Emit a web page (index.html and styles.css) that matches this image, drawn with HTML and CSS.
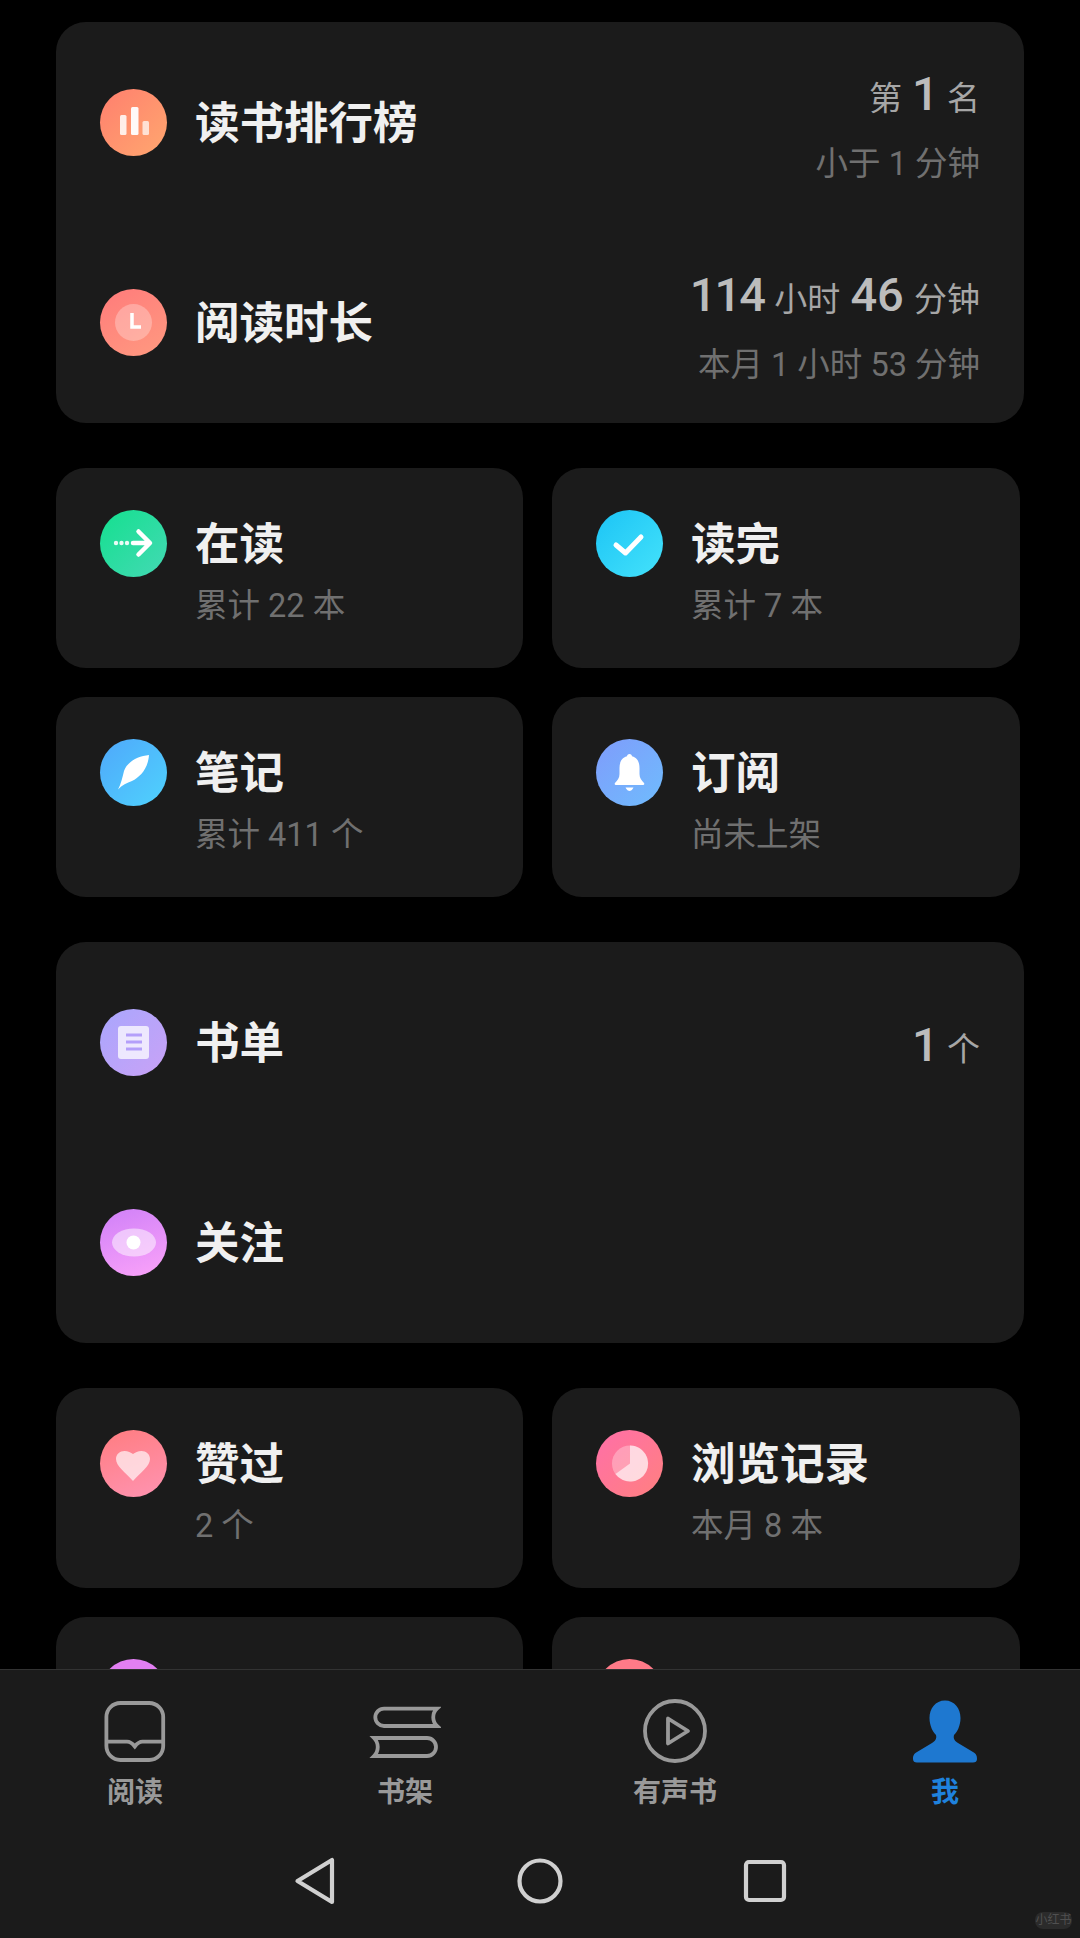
FILE: index.html
```html
<!DOCTYPE html>
<html lang="zh-CN">
<head>
  <meta charset="UTF-8" />
  <meta name="viewport" content="width=device-width, initial-scale=1.0" />
  <title>我</title>
  <link rel="stylesheet" href="styles.css">
</head>
<body>
  <div class="page">
    <main class="content">
      <section class="wide-card">
        <div class="row">
          <span class="icon icon-rank">
            <svg viewBox="0 0 67 67"><rect x="20" y="26" width="6.500" height="20" rx="1.500" fill="#fff" opacity=".85"/><rect x="31" y="18" width="7.500" height="28" rx="1.500" fill="#fff" opacity=".95"/><rect x="42.500" y="32" width="6.500" height="14" rx="1.500" fill="#fff" opacity=".7"/></svg>
          </span>
          <h2 class="title">读书排行榜</h2>
          <div class="value">
            <p class="value-main">第 <b class="tight">1</b> 名</p>
            <p class="value-sub">小于 1 分钟</p>
          </div>
        </div>
        <div class="row">
          <span class="icon icon-time">
            <svg viewBox="0 0 67 67"><circle cx="33.500" cy="33.500" r="18.500" fill="#fff" opacity=".28"/><path d="M32 24v14h9" fill="none" stroke="#fff" stroke-width="3.500"/></svg>
          </span>
          <h2 class="title">阅读时长</h2>
          <div class="value">
            <p class="value-main"><b class="tight">114</b> 小时 <b>46</b> 分钟</p>
            <p class="value-sub">本月 1 小时 53 分钟</p>
          </div>
        </div>
      </section>

      <section class="grid">
        <div class="card">
          <span class="icon icon-reading">
            <svg viewBox="0 0 67 67"><circle cx="16" cy="33" r="2.200" fill="#fff" opacity=".9"/><circle cx="21.500" cy="33" r="2.200" fill="#fff" opacity=".9"/><circle cx="27" cy="33" r="2.200" fill="#fff" opacity=".9"/><path d="M33 33h16M38.500 21.500 50 33 38.500 44.500" fill="none" stroke="#fff" stroke-width="4.500" stroke-linecap="round" stroke-linejoin="round"/></svg>
          </span>
          <div class="card-text">
            <h2 class="title">在读</h2>
            <p class="sub">累计 22 本</p>
          </div>
        </div>
        <div class="card">
          <span class="icon icon-done">
            <svg viewBox="0 0 67 67"><path d="M20 35 29.500 43 45 27" fill="none" stroke="#fff" stroke-width="5" stroke-linecap="round" stroke-linejoin="round"/></svg>
          </span>
          <div class="card-text">
            <h2 class="title">读完</h2>
            <p class="sub">累计 7 本</p>
          </div>
        </div>
        <div class="card">
          <span class="icon icon-note">
            <svg viewBox="0 0 67 67"><path d="M49 16C38 17 27 23 24 32C22.500 38 21 45 18 50.500C22 46 27 44 32 42C40 38 48 30 49 16Z" fill="#fff"/></svg>
          </span>
          <div class="card-text">
            <h2 class="title">笔记</h2>
            <p class="sub">累计 411 个</p>
          </div>
        </div>
        <div class="card">
          <span class="icon icon-sub">
            <svg viewBox="0 0 67 67"><path d="M33.500 15C32 15 31 16 31 17.300C25 19 23.500 24 23.500 29V35C23.500 39 21.500 41.500 19 44Q18 46 20 46H47Q49 46 48 44C45.500 41.500 43.500 39 43.500 35V29C43.500 24 42 19 36 17.300C36 16 35 15 33.500 15Z" fill="#fff"/><path d="M29.500 48.500H37.500C36.500 51 34.500 52 33.500 52S30.500 51 29.500 48.500Z" fill="#fff"/></svg>
          </span>
          <div class="card-text">
            <h2 class="title">订阅</h2>
            <p class="sub">尚未上架</p>
          </div>
        </div>
      </section>

      <section class="wide-card">
        <div class="row">
          <span class="icon icon-list">
            <svg viewBox="0 0 67 67"><rect x="18" y="17" width="31" height="33" rx="3" fill="#fff" opacity=".75"/><path d="M26 26h16M26 33h16M26 40h16" stroke="#b49ffa" stroke-width="2.800"/></svg>
          </span>
          <h2 class="title">书单</h2>
          <div class="value value-single">
            <p class="value-main"><b class="tight">1</b> 个</p>
          </div>
        </div>
        <div class="row">
          <span class="icon icon-follow">
            <svg viewBox="0 0 67 67"><ellipse cx="34" cy="33.500" rx="22" ry="14" fill="#fff" opacity=".5"/><circle cx="33.500" cy="33.500" r="7" fill="#fff"/></svg>
          </span>
          <h2 class="title">关注</h2>
        </div>
      </section>

      <section class="grid">
        <div class="card">
          <span class="icon icon-like">
            <svg viewBox="0 0 67 67"><path d="M33 51C25 42 16 36 16 29C16 24 20 21 24.500 21C28 21 31 22.500 33 24C35 22.500 38 21 41.500 21C46 21 50 24 50 29C50 36 41 42 33 51Z" fill="#fff" opacity=".66"/></svg>
          </span>
          <div class="card-text">
            <h2 class="title">赞过</h2>
            <p class="sub">2 个</p>
          </div>
        </div>
        <div class="card">
          <span class="icon icon-history">
            <svg viewBox="0 0 67 67"><circle cx="34" cy="33.500" r="18" fill="#fff" opacity=".3"/><path d="M34 33.500V15.500A18 18 0 1 1 19.500 44Z" fill="#fff" opacity=".6"/></svg>
          </span>
          <div class="card-text">
            <h2 class="title">浏览记录</h2>
            <p class="sub">本月 8 本</p>
          </div>
        </div>
        <div class="card">
          <span class="icon icon-more-a"></span>
        </div>
        <div class="card">
          <span class="icon icon-more-b"></span>
        </div>
      </section>
    </main>

    <footer class="bottom">
      <nav class="tabs">
        <a class="tab">
          <svg viewBox="0 0 72 64"><rect x="7.400" y="4" width="56.800" height="57" rx="14"/><path d="M7.400 42.700H28Q32 42.700 35.800 47.500Q39.500 42.700 43.500 42.700H64.200"/></svg>
          <span>阅读</span>
        </a>
        <a class="tab">
          <svg viewBox="0 0 72 64"><path d="M68 9.600H15A8.700 8.700 0 0 0 15 27H68C63 22.500 63 14 68 9.600Z"/><path d="M5 39H58A9 9 0 0 1 58 57H5C10 52 10 44 5 39Z"/></svg>
          <span>书架</span>
        </a>
        <a class="tab">
          <svg viewBox="0 0 72 64"><circle cx="36" cy="32" r="30"/><path d="M29 19.500 49 32 29 44.500Z" stroke-linejoin="round"/></svg>
          <span>有声书</span>
        </a>
        <a class="tab tab-active">
          <svg viewBox="0 0 72 64"><path d="M36 1.500C26.500 1.500 20.500 9.500 20.500 19C20.500 27 24 33 27 36C28 40 26 42 23 44L8 53C4.500 55 4 57 4 60C4 62.500 5.500 63.500 8 63.500H64C66.500 63.500 68 62.500 68 60C68 57 67.500 55 64 53L49 44C46 42 44 40 45 36C48 33 51.500 27 51.500 19C51.500 9.500 45.500 1.500 36 1.500Z"/></svg>
          <span>我</span>
        </a>
      </nav>
      <div class="sysbar">
        <svg viewBox="0 0 50 50"><path d="M7.500 25 42 4V46Z" stroke-linejoin="round"/></svg>
        <svg viewBox="0 0 50 50"><circle cx="25" cy="25" r="20.500"/></svg>
        <svg viewBox="0 0 50 50"><rect x="6" y="6" width="38" height="38" rx="3"/></svg>
      </div>
      <span class="watermark">小红书</span>
    </footer>
  </div>
</body>
</html>
```

FILE: styles.css
```css
* {
  box-sizing: border-box;
}
body {
  margin: 0;
  background-color: #000;
  font-family: Roboto, "Noto Sans CJK SC", sans-serif;
}
h2, p {
  margin: 0;
}
.page {
  width: 1080px;
  height: 1938px;
  display: flex;
  flex-direction: column;
  overflow: hidden;
}
.content {
  flex: 1;
  min-height: 0;
  overflow: hidden;
  padding: 22px 0 0 56px;
}

.wide-card {
  width: 968px;
  height: 401px;
  margin-bottom: 45px;
  background-color: #1b1b1b;
  border-radius: 30px;
}
.row {
  height: 200.5px;
  padding: 0 44px;
  display: flex;
  align-items: center;
  gap: 28px;
}
.title {
  font-size: 44.5px;
  font-weight: 700;
  line-height: 67px;
  color: #f0f0f0;
}
.row .title {
  margin-top: 4px;
}
.value {
  margin-left: auto;
  align-self: flex-start;
  margin-top: 39px;
  text-align: right;
}
.value-single {
  align-self: center;
  margin-top: 10px;
}
.value-main {
  font-size: 33px;
  word-spacing: 2px;
  line-height: 66px;
  color: #a6a6a6;
}
.value-main b {
  font-size: 47px;
  font-weight: 500;
  color: #bcbcbc;
}
.value-main .tight {
  letter-spacing: -2px;
}
.value-sub {
  font-size: 32.5px;
  line-height: 64px;
  color: #707070;
}

.grid {
  width: 964px;
  display: grid;
  grid-template-columns: 467px 468px;
  gap: 29px;
  margin-bottom: 45px;
}
.card {
  height: 200px;
  padding: 42px 44px 0;
  display: flex;
  gap: 28px;
  background-color: #1b1b1b;
  border-radius: 30px;
}
.card .title {
  padding-top: 2px;
}
.sub {
  font-size: 32.5px;
  line-height: 54px;
  color: #707070;
}

.icon {
  flex: none;
  width: 67px;
  height: 67px;
  border-radius: 50%;
}
.icon svg {
  display: block;
  width: 67px;
  height: 67px;
}
.icon-rank { background: linear-gradient(135deg, #ff7f6e, #ffa76f); }
.icon-time { background: linear-gradient(150deg, #ff7b7b, #ff9a80); }
.icon-reading { background: linear-gradient(135deg, #14e08f, #44d9b4); }
.icon-done { background: linear-gradient(135deg, #1cc4f5, #44e2fb); }
.icon-note { background: linear-gradient(135deg, #4fa8fb, #4fd2fd); }
.icon-sub { background: linear-gradient(135deg, #7f9cfb, #6fbcfd); }
.icon-list { background: linear-gradient(135deg, #a9a6fd, #c9a2f6); }
.icon-follow { background: linear-gradient(160deg, #cf80f8, #fba3f9); }
.icon-like { background: linear-gradient(160deg, #ff7c80, #ff94b2); }
.icon-history { background: linear-gradient(135deg, #ff6fa8, #ff8080); }
.icon-more-a { background: #e27ff2; }
.icon-more-b { background: #ff7a88; }

.bottom {
  position: relative;
  flex: none;
  height: 269px;
  background-color: #1b1b1b;
  border-top: 1px solid #333;
}
.tabs {
  display: grid;
  grid-template-columns: repeat(4, 270px);
  padding-top: 29px;
}
.tab {
  display: flex;
  flex-direction: column;
  align-items: center;
  gap: 12px;
  font-size: 28px;
  font-weight: 700;
  line-height: 36px;
  color: #999;
}
.tab svg {
  display: block;
  width: 72px;
  height: 64px;
  fill: none;
  stroke: #999;
  stroke-width: 3.800;
}
.tab-active {
  color: #1f82dd;
}
.tab-active svg {
  fill: #1e78d0;
  stroke: none;
}
.sysbar {
  display: grid;
  grid-template-columns: repeat(3, 50px);
  justify-content: center;
  column-gap: 175px;
  padding-top: 45px;
}
.sysbar svg {
  display: block;
  width: 50px;
  height: 50px;
  fill: none;
  stroke: #d0d0d0;
  stroke-width: 4.200;
}
.watermark {
  position: absolute;
  right: 8px;
  bottom: 9px;
  width: 37px;
  height: 17px;
  border-radius: 8px;
  background-color: #2b2b2b;
  font-size: 12px;
  line-height: 17px;
  text-align: center;
  color: #505050;
}
```
